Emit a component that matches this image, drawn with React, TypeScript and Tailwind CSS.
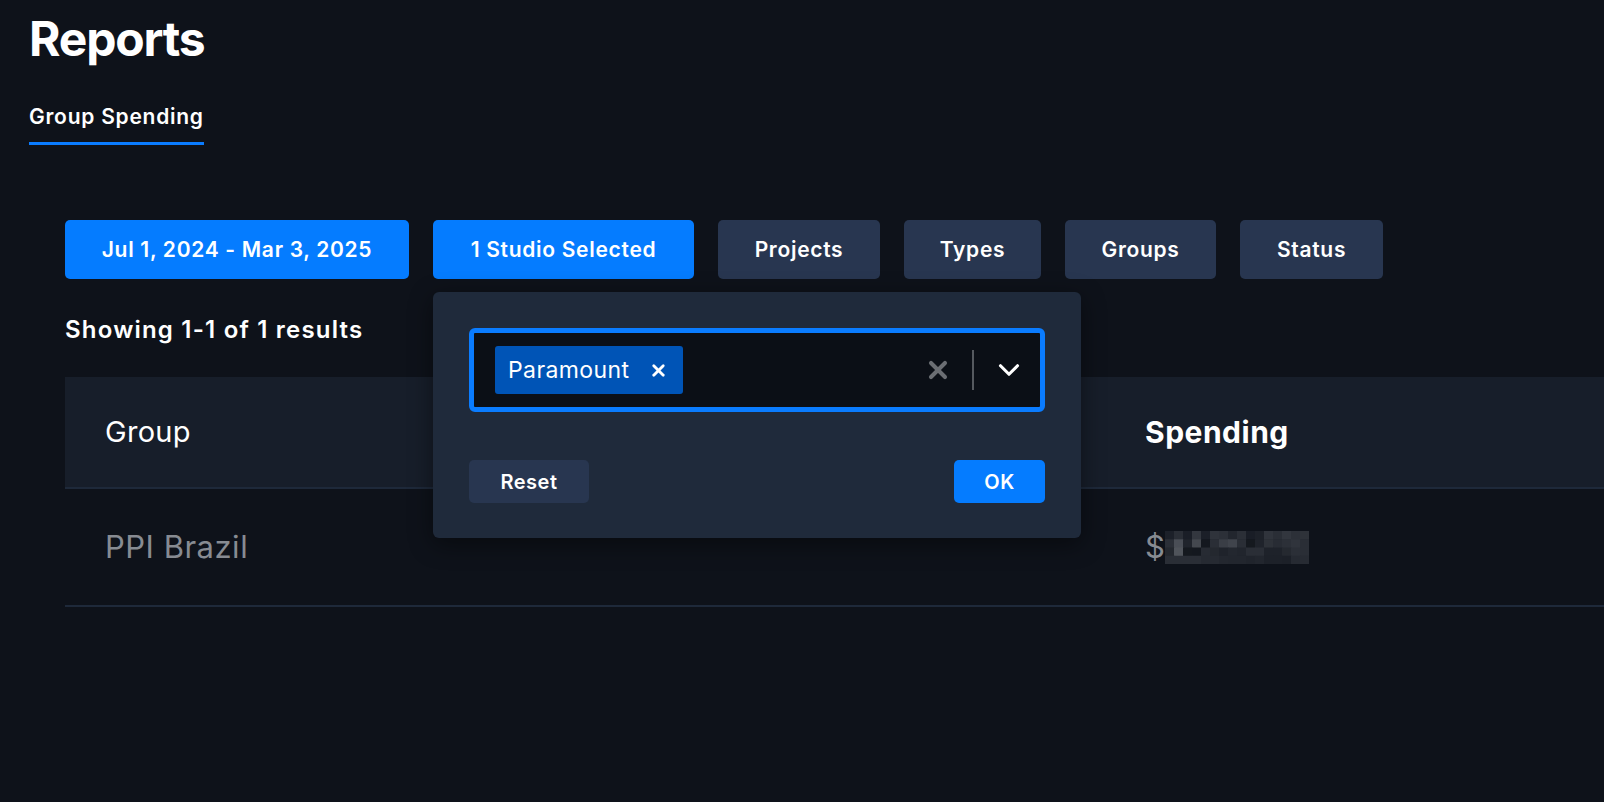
import { ChevronDown, X } from 'lucide-react';

const filters = [
  { label: 'Projects', w: 'w-[162px]' },
  { label: 'Types', w: 'w-[137px]' },
  { label: 'Groups', w: 'w-[151px]' },
  { label: 'Status', w: 'w-[143px]' },
];

// pixelated redaction block next to the spending amount
const mosaic = [
  '#1c2029', '#2a2e36', '#1a1e27', '#33373f', '#1b1f28', '#2f333b', '#2c3038', '#22262e', '#2b2f37', '#191d26', '#1d2129', '#30343c', '#2a2e36', '#32363e', '#2c3038', '#2e3239',
  '#2b2f37', '#4a4e56', '#20242c', '#44484f', '#14181f', '#2a2e36', '#3a3e46', '#40444c', '#2a2e36', '#15191f', '#1f232b', '#2e3239', '#282c34', '#2c3038', '#30343c', '#2a2e36',
  '#24282f', '#50545b', '#15191f', '#14181f', '#272b33', '#24282f', '#1f232b', '#23272f', '#21252d', '#2a2e36', '#2a2e36', '#1e222a', '#1e222a', '#252930', '#2b2f37', '#2a2e36',
  '#2a2e36', '#2a2e36', '#2a2e36', '#2a2e36', '#262a32', '#262a32', '#23272f', '#22262e', '#22262e', '#20242c', '#22262e', '#1d2129', '#1d2129', '#1c2028', '#262a32', '#272b33',
];

function Mosaic() {
  const cols = 16;
  const w = 9;
  const h = 8.25;
  return (
    <svg width={144} height={33} viewBox="0 0 144 33" className="block">
      {mosaic.map((c, i) => (
        <rect key={i} x={(i % cols) * w} y={Math.floor(i / cols) * h} width={w + 0.5} height={h + 0.5} fill={c} />
      ))}
    </svg>
  );
}

export default function App() {
  return (
    <div className="min-h-screen w-full overflow-hidden bg-[#0e121a] text-white" style={{ fontFamily: 'Inter, "Liberation Sans", sans-serif' }}>
      {/* Header */}
      <div className="px-[29px] pt-[15px]">
        <h1 className="text-[48px] leading-[48px] font-bold tracking-[-1.2px]">Reports</h1>
        <div className="mt-[42px]">
          <span className="inline-block border-b-[3px] border-[#0a7cff] pb-[13px] text-[21px] leading-[24px] font-semibold tracking-[0.75px]">
            Group Spending
          </span>
        </div>
      </div>

      {/* Content */}
      <div className="pl-[65px] pt-[75px]">
        {/* Filters */}
        <div className="flex items-center gap-6">
          <button className="h-[59px] w-[344px] rounded-[5px] bg-[#057cff] text-[21px] font-semibold tracking-[0.7px]">
            Jul 1, 2024 - Mar 3, 2025
          </button>
          <div className="relative">
            <button className="h-[59px] w-[261px] rounded-[5px] bg-[#057cff] text-[21px] font-semibold tracking-[0.7px]">
              1 Studio Selected
            </button>

            {/* Studio popover */}
            <div className="absolute left-0 top-[72px] z-10 w-[648px] rounded-[6px] bg-[#1f2a3b] px-9 pt-9 pb-[35px] shadow-[0_6px_24px_rgba(0,0,0,0.45)]">
              <div className="flex h-[84px] items-center rounded-[6px] border-[5px] border-[#0a7cff] bg-[#0b0f16] pl-[21px] pr-[14px]">
                <div className="flex h-[48px] items-center gap-[20px] rounded-[3px] bg-[#0054b6] pl-[13px] pr-[15px]">
                  <span className="text-[23px] font-normal tracking-[0.4px]">Paramount</span>
                  <X className="h-[19px] w-[19px]" strokeWidth={3.5} />
                </div>
                <div className="flex-1" />
                <X className="h-[28px] w-[28px] text-[#6b6e73]" strokeWidth={3.5} />
                <div className="ml-[20px] mr-[18px] h-[40px] w-[2px] bg-[#55595f]" />
                <ChevronDown className="h-[34px] w-[34px] text-white" strokeWidth={2.2} />
              </div>
              <div className="mt-[48px] flex items-center justify-between">
                <button className="h-[43px] w-[120px] rounded-[5px] bg-[#283650] text-[20px] font-semibold tracking-[0.5px]">Reset</button>
                <button className="h-[43px] w-[91px] rounded-[5px] bg-[#057cff] text-[20px] font-semibold tracking-[0.5px]">OK</button>
              </div>
            </div>
          </div>
          {filters.map((f) => (
            <button key={f.label} className={`h-[59px] ${f.w} rounded-[5px] bg-[#283650] text-[21px] font-semibold tracking-[0.7px]`}>
              {f.label}
            </button>
          ))}
        </div>

        <p className="mt-[37px] text-[24px] leading-[28px] font-semibold tracking-[1.2px]">Showing 1-1 of 1 results</p>

        {/* Table */}
        <div className="mt-[33px]">
          <div className="grid h-[112px] grid-cols-[1040px_1fr] items-center border-b-2 border-[#1e293a] bg-[#171e2a]">
            <div className="px-10 text-[29px] font-normal tracking-[0.3px]">Group</div>
            <div className="px-10 text-[30px] font-bold tracking-[0.5px]">Spending</div>
          </div>
          <div className="grid h-[118px] grid-cols-[1040px_1fr] items-center border-b-2 border-[#1e293a]">
            <div className="px-10 text-[31px] font-normal tracking-[0.5px] text-[#878b92]">PPI Brazil</div>
            <div className="flex items-center px-10">
              <span className="text-[31px] font-normal text-[#878b92]">$</span>
              <Mosaic />
            </div>
          </div>
        </div>
      </div>
    </div>
  );
}
